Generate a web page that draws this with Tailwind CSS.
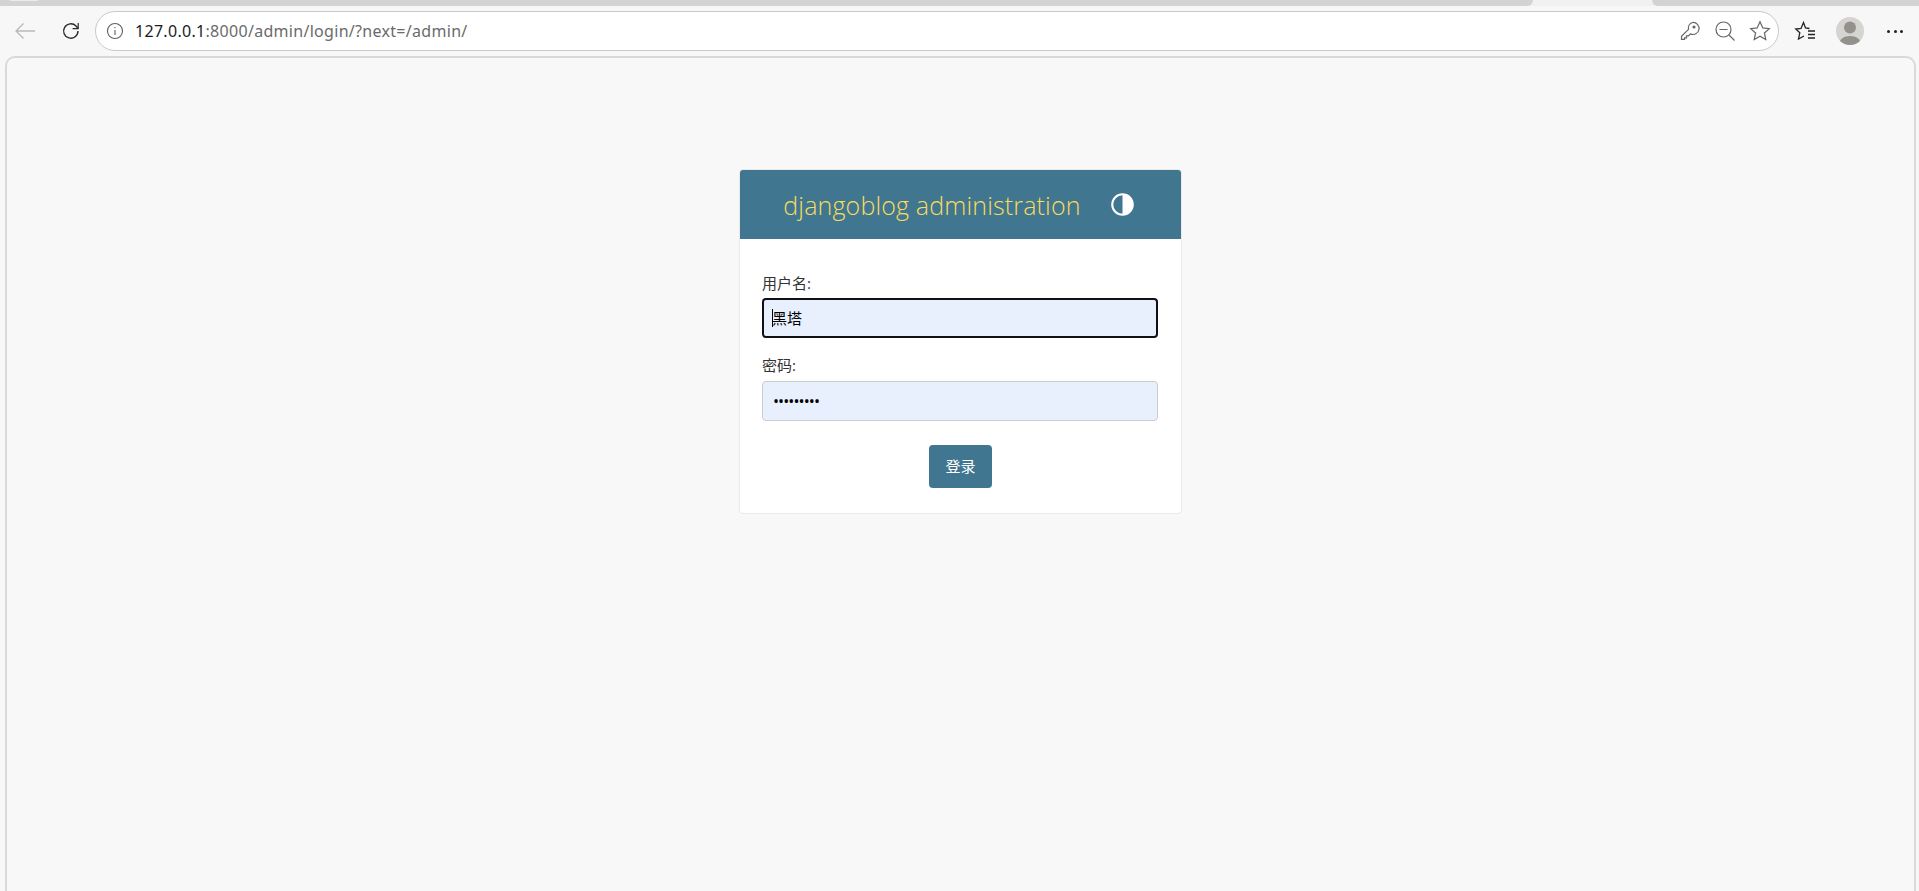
<!DOCTYPE html>
<html lang="zh">
<head>
<meta charset="utf-8">
<title>Log in</title>
<script src="https://cdn.jsdelivr.net/npm/@tailwindcss/browser@4"></script>
</head>
<body class="h-[891px] w-[1919px] overflow-hidden bg-[#f7f7f7] font-['Open_Sans','Noto_Sans_CJK_SC',sans-serif]">
<div class="flex h-[6px] bg-[#f1f1f1]">
  <div class="h-[6px] w-[1533px] rounded-br-[8px] bg-[#d3d3d3]"><div class="ml-[10px] h-px w-[28px] bg-[#ececec]"></div></div>
  <div class="h-[6px] w-[119px]"></div>
  <div class="h-[6px] flex-1 rounded-bl-[8px] bg-[#d3d3d3]"></div>
</div>
<div class="flex h-[50px] items-center bg-[#f7f7f7]">
  <div class="flex w-[95px] items-center pl-[14px]">
    <svg width="22" height="18" viewBox="0 0 22 18" fill="none" stroke="#b9b9b9" stroke-width="1.3"><path d="M21 9H2M9.500 1.500 2 9l7.500 7.500"/></svg>
    <svg class="ml-[25px]" width="20" height="20" viewBox="0 0 20 20" fill="none" stroke="#2b2b2b" stroke-width="1.400"><path d="M17 10a7.200 7.200 0 1 1-2-5L17 7.300"/><path d="M17.200 2v5.600h-5.600" stroke-width="1.200"/></svg>
  </div>
  <div class="flex h-[40px] w-[1684px] items-center rounded-full border border-[#c9c9c9] bg-white pl-[10px] pr-[7px]">
    <svg width="18" height="18" viewBox="0 0 18 18" fill="none" stroke="#5f5f5f" stroke-width="1.100"><circle cx="9" cy="9" r="7.500"/><path d="M9 8v5M9 5v1.300"/></svg>
    <div class="ml-[11px] font-['Noto_Sans',sans-serif] text-[16px] tracking-[0.3px] text-[#6b6b6b]"><span class="text-[#1c1c1c]">127.0.0.1</span>:8000/admin/login/?next=/admin/</div>
    <div class="ml-auto flex items-center gap-[13px]">
      <svg width="22" height="22" viewBox="0 0 22 22" fill="none" stroke="#666" stroke-width="1.200"><path d="M13.500 2.500a6 6 0 1 1-2 11.400l-2 1.900H7.500v2H5.500v1.500H2.500v-3l7-7a6 6 0 0 1 4-6.800z"/><circle cx="15" cy="7" r="1" fill="#666"/></svg>
      <svg width="22" height="22" viewBox="0 0 22 22" fill="none" stroke="#666" stroke-width="1.200"><circle cx="9.500" cy="9.500" r="7.500"/><path d="M5.500 9.500h8M15 15l5.500 5.500"/></svg>
      <svg width="22" height="22" viewBox="0 0 22 22" fill="none" stroke="#666" stroke-width="1.200"><path d="m11 1.800 2.800 6.100 6.500.7-4.900 4.400 1.400 6.500-5.800-3.300-5.800 3.300 1.400-6.500L1.700 8.600l6.500-.7z"/></svg>
    </div>
  </div>
  <div class="flex flex-1 items-center pl-[15px]">
    <svg width="22" height="22" viewBox="0 0 22 22" fill="none" stroke="#222" stroke-width="1.300"><path d="M15.500 8.500 11.500 8 9.500 2.500 7 8.500l-5.200.6 4 3.700-1.300 6.200 5.500-3"/><path d="M14 11h7M14 14.500h7M14 18h7"/></svg>
    <div class="ml-[20px] flex h-[28px] w-[28px] items-end justify-center overflow-hidden rounded-full bg-[#d6d4d1]">
      <svg width="28" height="28" viewBox="0 0 28 28" fill="#94908c"><circle cx="14" cy="10.500" r="6"/><path d="M3 28c0-6 5-9 11-9s11 3 11 9z"/></svg>
    </div>
    <div class="ml-[23px] flex gap-[3.500px]">
      <div class="h-[3px] w-[3px] rounded-full bg-[#222]"></div>
      <div class="h-[3px] w-[3px] rounded-full bg-[#222]"></div>
      <div class="h-[3px] w-[3px] rounded-full bg-[#222]"></div>
    </div>
  </div>
</div>
<main class="ml-[5px] mr-[3px] h-[836px] rounded-t-[10px] border-x-2 border-t-2 border-[#d9d9d9] bg-[#f8f8f8] pt-[111px]">
  <div class="ml-[732px] w-[443px] overflow-hidden rounded-[4px] border border-[#eaeaea] bg-white">
    <div class="flex h-[69px] items-center justify-center gap-[30px] bg-[#417690] pr-[4px]">
      <h1 class="mt-[2px] font-['Open_Sans',sans-serif] text-[25px] font-light tracking-[0.15px] text-[#f5dd5d]">djangoblog administration</h1>
      <svg width="23" height="23" viewBox="0 0 22 22" class="mb-[1px]"><circle cx="11" cy="11" r="9.800" fill="none" stroke="white" stroke-width="2"/><path d="M11 1a10 10 0 0 1 0 20z" fill="white"/></svg>
    </div>
    <form class="pl-[22px] pr-[23px] pt-[34px] pb-[25px]">
      <label class="block h-[20px] text-[15px] leading-[20px] text-[#333]">用户名:</label>
      <div class="mt-[5px] flex h-[40px] items-center rounded-[4px] border-2 border-[#111] bg-[#e8f0fe] pl-[8px] text-[15px] text-black"><span class="mr-[-1px] h-[18px] w-px bg-black"></span><span>黑塔</span></div>
      <label class="mt-[17px] block h-[20px] text-[15px] leading-[20px] text-[#333]">密码:</label>
      <div class="mt-[6px] flex h-[40px] items-center rounded-[4px] border border-[#ccc] bg-[#e8f0fe] pl-[10px] text-[16px] leading-none tracking-[-0.9px] text-black">•••••••••</div>
      <div class="mt-[24px] flex justify-center pl-px">
        <button type="button" class="h-[43px] w-[63px] rounded-[4px] bg-[#417690] text-[15px] text-white">登录</button>
      </div>
    </form>
  </div>
</main>
</body>
</html>
